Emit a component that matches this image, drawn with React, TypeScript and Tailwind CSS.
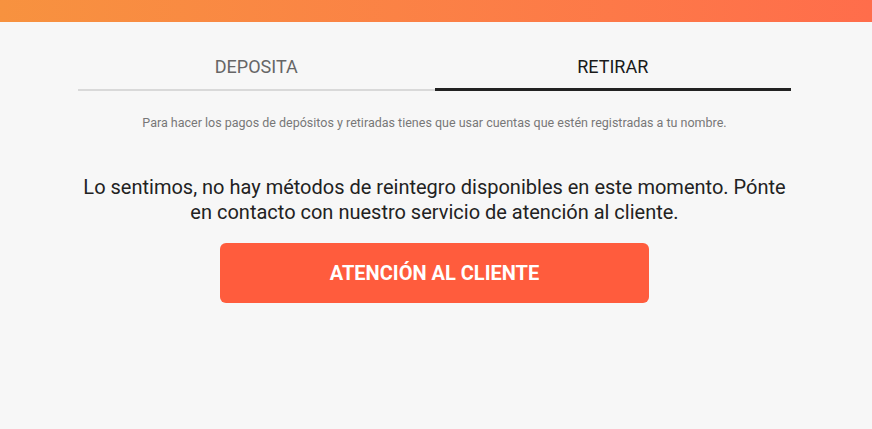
import React from "react";

export default function App() {
  return (
    <div className="min-h-[429px] w-full bg-[#f7f7f7]" style={{ fontFamily: "Roboto, 'Liberation Sans', sans-serif" }}>
      <div className="h-[22px] w-full bg-gradient-to-r from-[#f7923f] to-[#ff6d4b]" />
      <div className="ml-[78px] w-[713px] pt-[22px]">
        <div className="flex">
          <div className="flex h-[47px] flex-1 items-center justify-center border-b-2 border-[#d9d9d9] text-[18px] text-[#666666]">
            DEPOSITA
          </div>
          <div className="flex h-[47px] flex-1 items-center justify-center border-b-[3px] border-[#222222] text-[18px] text-[#1a1a1a]">
            RETIRAR
          </div>
        </div>
        <p className="mt-[24px] text-center text-[12.5px] leading-[16px] text-[#777777]">
          Para hacer los pagos de depósitos y retiradas tienes que usar cuentas que estén registradas a tu nombre.
        </p>
        <p className="mx-auto mt-[44px] w-[713px] text-center text-[20px] leading-[25px] text-[#222222]">
          Lo sentimos, no hay métodos de reintegro disponibles en este momento. Pónte
          <br />
          en contacto con nuestro servicio de atención al cliente.
        </p>
        <div className="mt-[18px] flex justify-center">
          <button className="h-[60px] w-[429px] rounded-[6px] bg-[#ff5c3d] text-[20px] font-bold text-white">
            ATENCIÓN AL CLIENTE
          </button>
        </div>
      </div>
    </div>
  );
}
